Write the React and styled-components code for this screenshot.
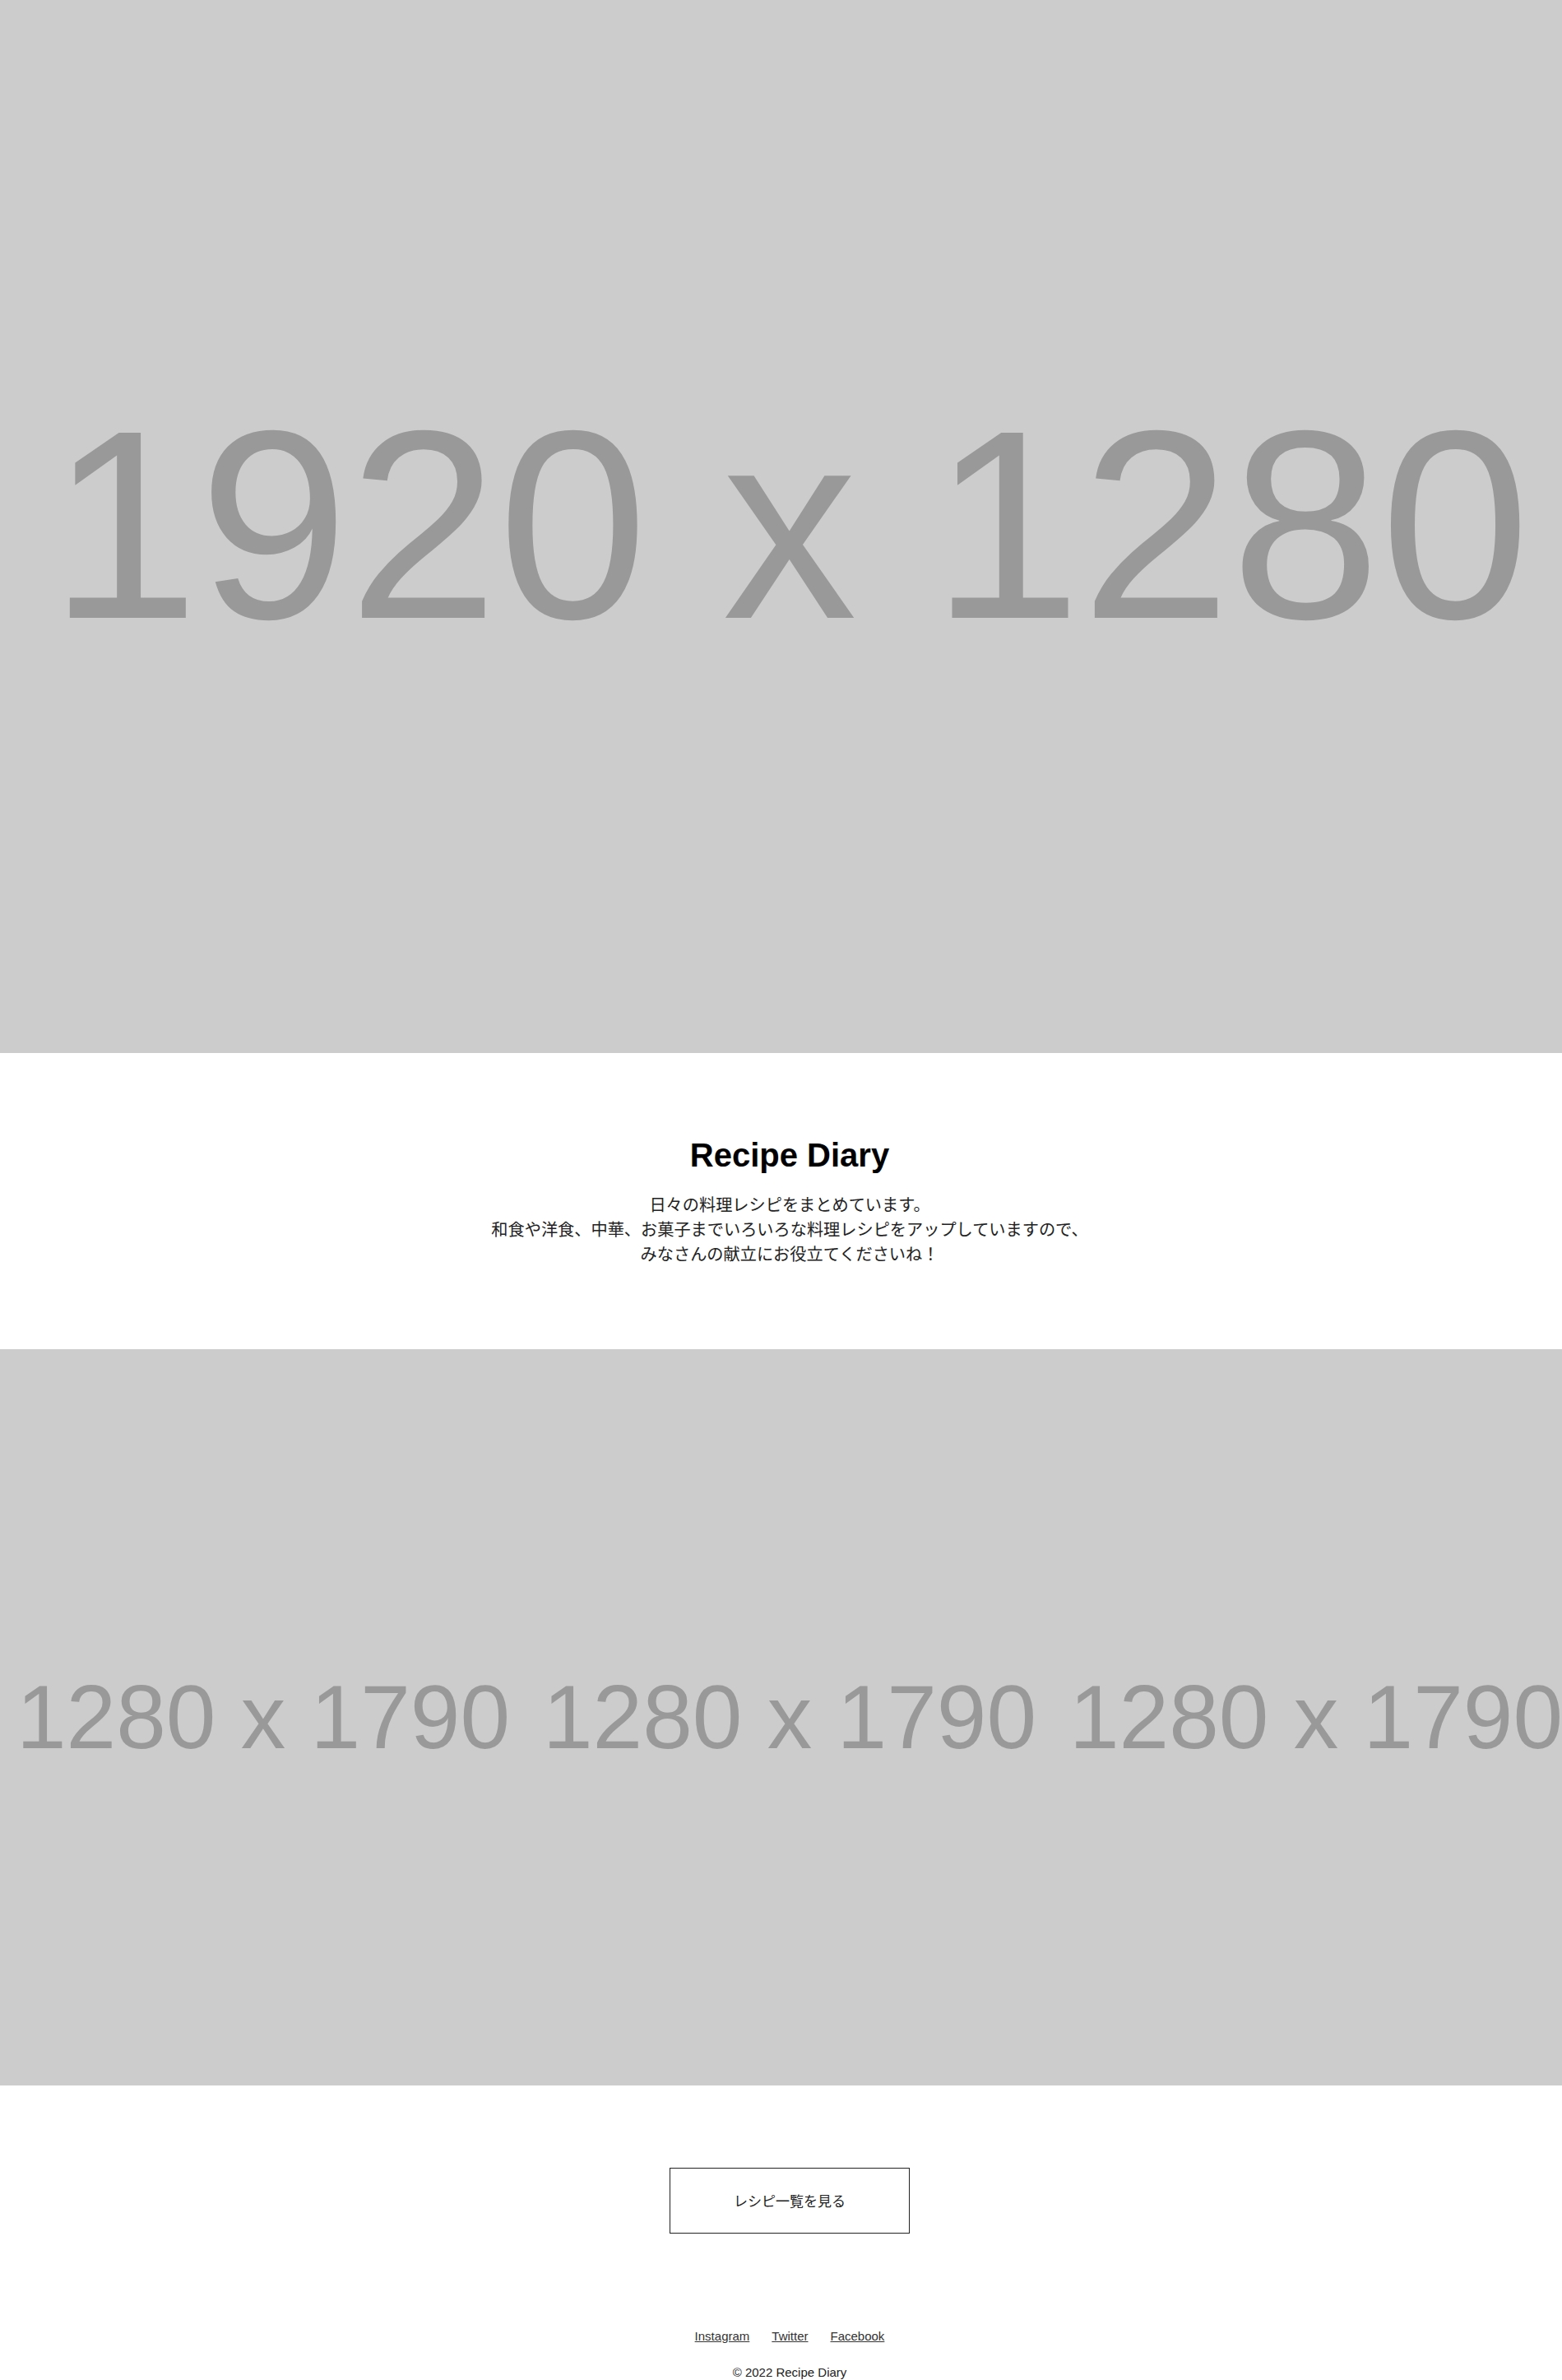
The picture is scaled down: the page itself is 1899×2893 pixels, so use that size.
import React from 'react';
import styled, { createGlobalStyle } from 'styled-components';

const GlobalStyle = createGlobalStyle`
	html, body {
		margin: 0;
		padding: 0;
		overflow-x: hidden;
		background: #fff;
	}
	body {
		font-family: "Liberation Sans", "Noto Sans CJK JP", sans-serif;
		color: #333;
	}
`;

// page is laid out for a 1920 wide screen
const Page = styled.div`
	width: 1920px;
`;

const Placeholder = styled.div`
	display: flex;
	align-items: center;
	justify-content: center;
	height: ${(props) => props.h}px;
	background: #ccc;
	color: #999;
	font-family: "Liberation Sans", Arial, sans-serif;
	font-size: ${(props) => props.size}px;
	line-height: 1;
	white-space: nowrap;
	overflow: hidden;
	padding-bottom: ${(props) => props.shift || 0}px;
	box-sizing: border-box;
`;

const Gallery = styled.div`
	display: grid;
	grid-template-columns: repeat(3, 640px);
`;

const Intro = styled.section`
	padding: 100px 0;
	text-align: center;
`;

const Title = styled.h1`
	margin: 0 0 22px;
	font-size: 40px;
	line-height: 48px;
	font-weight: bold;
	color: #000;
`;

const Lead = styled.p`
	margin: 0;
	font-size: 20.2px;
	line-height: 30px;
	color: #222;
`;

const ButtonArea = styled.div`
	display: flex;
	justify-content: center;
	padding-top: 100px;
`;

const MoreButton = styled.a`
	display: flex;
	align-items: center;
	justify-content: center;
	width: 292px;
	height: 80px;
	box-sizing: border-box;
	border: 1px solid #222;
	padding-bottom: 2px;
	font-size: 17px;
	color: #222;
	text-decoration: none;
`;

const Footer = styled.footer`
	padding: 116px 0 1px;
	text-align: center;
`;

const SnsList = styled.ul`
	display: flex;
	justify-content: center;
	gap: 27px;
	margin: 0 0 27px;
	padding: 0;
	list-style: none;
	font-size: 15px;
	line-height: 17px;
`;

const SnsLink = styled.a`
	color: #333;
	text-decoration: underline;
`;

const Copy = styled.small`
	display: block;
	font-size: 15px;
	line-height: 17px;
	color: #222;
`;

const sns = ['Instagram', 'Twitter', 'Facebook'];

export default function App() {
	return (
		<Page>
			<GlobalStyle />
			<Placeholder h={1280} size={327} shift={6}>1920 x 1280</Placeholder>

			<Intro>
				<Title>Recipe Diary</Title>
				<Lead>
					日々の料理レシピをまとめています。<br />
					和食や洋食、中華、お菓子までいろいろな料理レシピをアップしていますので、<br />
					みなさんの献立にお役立てくださいね！
				</Lead>
			</Intro>

			<Gallery>
				{[0, 1, 2].map((i) => (
					<Placeholder key={i} h={895} size={109}>1280 x 1790</Placeholder>
				))}
			</Gallery>

			<ButtonArea>
				<MoreButton href="#">レシピ一覧を見る</MoreButton>
			</ButtonArea>

			<Footer>
				<SnsList>
					{sns.map((name) => (
						<li key={name}>
							<SnsLink href="#">{name}</SnsLink>
						</li>
					))}
				</SnsList>
				<Copy>© 2022 Recipe Diary</Copy>
			</Footer>
		</Page>
	);
}
